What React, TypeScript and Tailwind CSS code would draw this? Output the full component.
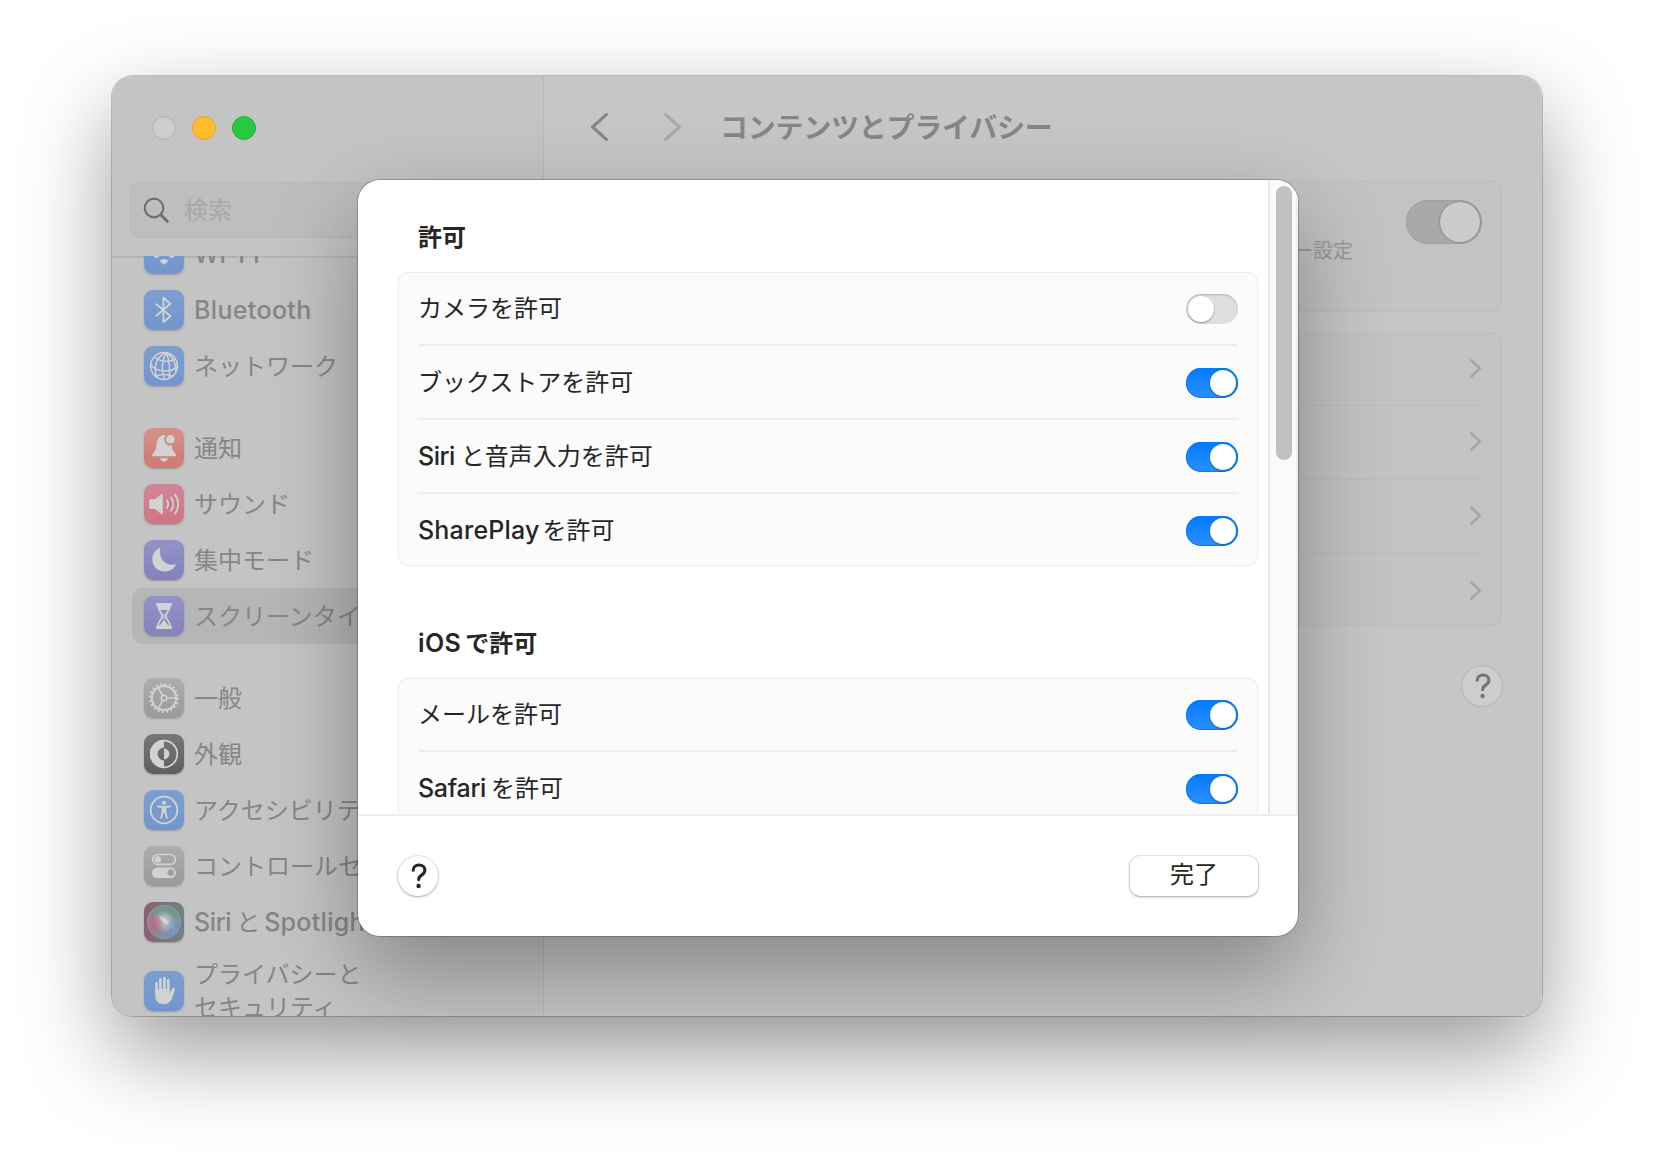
import React from "react";

type IconName =
  | "wifi" | "bluetooth" | "globe" | "bell" | "speaker" | "moon" | "hourglass"
  | "gear" | "appearance" | "accessibility" | "control" | "siri" | "hand";

const G = "#d2d2d2";

function Glyph({ name }: { name: IconName }) {
  const line = { fill: "none", stroke: G, strokeLinecap: "round" as const, strokeLinejoin: "round" as const };
  switch (name) {
    case "wifi":
      return (
        <g>
          <path d="M20 30.8 L15.6 27 A6 6 0 0 1 24.4 27 Z" fill={G} />
          <path {...line} strokeWidth="3" strokeLinecap="butt" d="M11 23.4 A12.4 12.4 0 0 1 29 23.4 M7 17.8 A18.4 18.4 0 0 1 33 17.8" />
        </g>
      );
    case "bluetooth":
      return <path {...line} strokeWidth="1.9" d="M12.4 14.3 L26.4 26.3 L19.4 32.2 V7.8 L26.4 13.7 L12.4 25.7" />;
    case "globe":
      return (
        <g {...line} strokeWidth="1.5">
          <circle cx="20" cy="20" r="13.4" />
          <path d="M22.2 6.8 C12.5 10.5 9.6 18.5 12.2 30.8" />
          <path d="M22.2 6.8 C17.8 14.5 17.4 24.5 20.4 33.4" />
          <path d="M22.2 6.8 C25.6 14.5 26.3 23 25.2 32.3" />
          <path d="M22.2 6.8 C28.8 10.6 31.8 16.4 32 25" />
          <path d="M10.4 10.8 C16 16.2 25.6 16.6 31.2 12.8" />
          <path d="M6.7 18.6 C13 26.4 26.5 27.2 33.4 20.6" />
          <path d="M11.6 30.2 C16.5 28.2 23.5 28.2 28.6 30.2" />
        </g>
      );
    case "bell":
      return (
        <g fill={G}>
          <path d="M20.6 6.9 C20.9 6.9 21.4 7 21.8 7.1 A6.2 6.2 0 0 0 27.8 17.3 C28.1 20.9 28.6 22.5 30.6 24.7 C31.5 25.7 32 26.3 32 27 C32 27.8 31.4 28.2 30.5 28.2 H9.6 C8.7 28.2 8.1 27.8 8.1 27 C8.1 26.3 8.6 25.7 9.5 24.7 C11.9 22 12.2 20.3 12.5 16 C12.8 12 14 9.3 17 8.1 C17.9 7.2 19.2 6.9 20.6 6.9 Z" />
          <circle cx="26.4" cy="11.3" r="4.3" />
          <path d="M16 30.2 H24 C23.6 32.2 22 33.4 20 33.4 C18 33.4 16.4 32.2 16 30.2 Z" />
        </g>
      );
    case "speaker":
      return (
        <g>
          <path d="M6.8 15.2 H11 L17 10.4 C17.9 9.7 18.8 10.1 18.8 11.2 V29 C18.8 30.1 17.9 30.5 17 29.8 L11 25.1 H6.8 C5.8 25.1 5.2 24.5 5.2 23.5 V16.8 C5.2 15.8 5.8 15.2 6.8 15.2 Z" fill={G} />
          <path {...line} strokeWidth="1.8" d="M22.9 16.2 C24.5 18.6 24.5 21.6 22.9 24 M26.9 13.4 C30 17.4 30 22.8 26.9 26.8 M31 10.7 C35.2 16.2 35.2 24 31 29.5" />
        </g>
      );
    case "moon":
      return <path fill={G} d="M16.3 8.6 C14.6 18.4 20.6 26.4 30.6 24.4 C31.6 24.2 31.9 24.7 31.5 25.5 C29.4 29.2 25.4 31.5 20.7 31.5 C13.6 31.5 8.3 26.3 8.3 19.3 C8.3 14.7 10.9 10.5 15.1 8.3 C15.9 7.9 16.4 8 16.3 8.6 Z" />;
    case "hourglass":
      return (
        <g>
          <rect x="12" y="7" width="16" height="3.2" rx="1.2" fill={G} />
          <rect x="12" y="29.8" width="16" height="3.2" rx="1.2" fill={G} />
          <path {...line} strokeWidth="1.8" d="M14 9.5 C14 15.5 18.3 16.8 18.3 20 C18.3 23.2 14 24.5 14 30.5 M26 9.5 C26 15.5 21.7 16.8 21.7 20 C21.7 23.2 26 24.5 26 30.5" />
          <path fill={G} d="M14 9 H26 L25.4 14 H14.6 Z" />
          <path fill={G} d="M19.5 18 H20.5 V24.5 L25 30.5 H15 L19.5 24.5 Z" />
        </g>
      );
    case "gear":
      return (
        <g fill="none" stroke={G}>
          <circle cx="20" cy="20" r="14" strokeWidth="2" strokeDasharray="2 2.398" />
          <circle cx="20" cy="20" r="12.1" strokeWidth="2" />
          <circle cx="20" cy="20" r="2.7" strokeWidth="1.6" />
          <path strokeWidth="1.7" d="M23 20 H32 M18.6 17.4 L14 9.4 M18.6 22.6 L14 30.6" />
        </g>
      );
    case "appearance":
      return (
        <g>
          <circle cx="20" cy="20" r="13.3" fill="none" stroke={G} strokeWidth="1.7" />
          <path d="M20 6 A14 14 0 0 0 20 34 V26.4 A6.4 6.4 0 0 1 20 13.6 Z" fill={G} />
          <path d="M20 14.6 A5.4 5.4 0 0 1 20 25.4 Z" fill={G} />
        </g>
      );
    case "accessibility":
      return (
        <g>
          <circle cx="20" cy="20" r="13.3" fill="none" stroke={G} strokeWidth="1.8" />
          <circle cx="20" cy="12.8" r="2.1" fill={G} />
          <path {...line} strokeWidth="1.9" d="M13.8 16.4 L18.3 17 H21.7 L26.2 16.4 M18.6 17.3 V22 L17.2 28 M21.4 17.3 V22 L22.8 28" />
          <path fill={G} d="M18 16.6 H22 V23 H18 Z" />
        </g>
      );
    case "control":
      return (
        <g>
          <rect x="8.8" y="8.5" width="22.6" height="9.9" rx="4.95" fill="none" stroke={G} strokeWidth="1.6" />
          <circle cx="13.8" cy="13.4" r="3.1" fill={G} />
          <rect x="8" y="21.4" width="24" height="10.6" rx="5.3" fill={G} />
          <circle cx="26.8" cy="26.6" r="3.3" fill="#9c9c9c" />
        </g>
      );
    case "siri":
      return (
        <g>
          <defs>
            <radialGradient id="sTop" cx="0.6" cy="0.15" r="0.65"><stop offset="0" stopColor="#6a9a8b" /><stop offset="1" stopColor="#6a9a8b" stopOpacity="0" /></radialGradient>
            <radialGradient id="sLeft" cx="0.22" cy="0.55" r="0.35"><stop offset="0" stopColor="#c0667f" /><stop offset="1" stopColor="#b0708c" stopOpacity="0" /></radialGradient>
            <radialGradient id="sRight" cx="0.75" cy="0.78" r="0.5"><stop offset="0" stopColor="#7496bd" /><stop offset="1" stopColor="#7496bd" stopOpacity="0" /></radialGradient>
            <radialGradient id="sMid" cx="0.5" cy="0.48" r="0.34"><stop offset="0" stopColor="#dcdce0" /><stop offset="1" stopColor="#d0d0d8" stopOpacity="0" /></radialGradient>
          </defs>
          <circle cx="20" cy="20" r="16.8" fill="#8d8791" />
          <circle cx="20" cy="20" r="16.8" fill="url(#sTop)" />
          <circle cx="20" cy="20" r="16.8" fill="url(#sRight)" />
          <circle cx="20" cy="20" r="16.8" fill="url(#sMid)" />
          <circle cx="20" cy="20" r="16.8" fill="url(#sLeft)" />
          <path d="M15 13.5 C19 15 23 18.5 25 21.5 C21 22 17 19 15 13.5 Z" fill="#dedee2" opacity="0.7" />
          <path d="M24 21 L30 27.5" stroke="#c3b4ac" strokeWidth="1" opacity="0.8" />
          <circle cx="30" cy="20.5" r="5" fill="#7fa2c4" opacity="0.4" />
          <circle cx="20" cy="20" r="16.5" fill="none" stroke="#92a5a5" strokeWidth="0.8" opacity="0.8" />
        </g>
      );
    case "hand":
      return (
        <g>
          <path {...line} strokeWidth="2.7" d="M12.5 12.2 V21 M16.4 8.3 V20 M20.4 7.3 V20 M24.3 9.3 V20" />
          <path fill={G} d="M11.2 18 H25.7 V22.3 C26.6 21 27.4 19 28.2 17.6 C29 16.3 31.2 16.8 30.8 18.6 C30 21.8 29 25 27.7 28 C26.2 31.4 23.6 33.2 19.9 33.2 C14.5 33.2 11.2 29.9 11.2 24.6 Z" />
        </g>
      );
  }
}

function AppIcon({ name, bg }: { name: IconName; bg: string }) {
  return (
    <span className={`block size-10 shrink-0 rounded-[9px] shadow-[0_1px_2px_rgba(0,0,0,0.22)] ${bg}`}>
      <svg width="40" height="40" viewBox="0 0 40 40"><Glyph name={name} /></svg>
    </span>
  );
}

const BLUE = "bg-linear-to-b from-[#7c9fcf] to-[#7295cf]";
const GRAY = "bg-linear-to-b from-[#acacac] to-[#9a9a9a]";
const PURPLE = "bg-linear-to-b from-[#9493c6] to-[#8481bc]";

function SideRow({ name, bg, active, tall, children }: {
  name: IconName; bg: string; active?: boolean; tall?: boolean; children: React.ReactNode;
}) {
  return (
    <div className={`flex shrink-0 items-center gap-2.5 rounded-[10px] pl-3 whitespace-nowrap ${tall ? "h-[82px] leading-[33px]" : "h-14 leading-8"} ${active ? "bg-black/7" : ""}`}>
      <AppIcon name={name} bg={bg} />
      <span className={tall ? "" : "pt-0.5"}>{children}</span>
    </div>
  );
}

function Switch({ on = true }: { on?: boolean }) {
  return (
    <span className={`flex h-[30px] w-[52px] shrink-0 items-center rounded-full px-0.5 ${on ? "justify-end bg-linear-to-b from-[#007aff] to-[#2890ff] shadow-[inset_0_0_0_1px_#0878f5]" : "justify-start bg-[#dfdfdf] shadow-[inset_0_1px_2px_rgba(0,0,0,0.2)]"}`}>
      <span className="size-[26px] rounded-full bg-white shadow-[0_1px_2px_rgba(0,0,0,0.35)]" />
    </span>
  );
}

function Row({ on, last, children }: { on?: boolean; last?: boolean; children: React.ReactNode }) {
  return (
    <div className={`flex shrink-0 items-center justify-between pt-0.5 ${last ? "h-[72px]" : "h-[74px] border-b-2 border-[#eeeeee]"}`}>
      <span className="text-[24px] leading-8 whitespace-nowrap">{children}</span>
      <Switch on={on} />
    </div>
  );
}

function Card({ children }: { children: React.ReactNode }) {
  return (
    <div className="flex h-[294px] shrink-0 flex-col rounded-[10px] bg-[#fbfbfb] px-5 shadow-[inset_0_0_0_1px_#ececec]">
      {children}
    </div>
  );
}

function Lat({ className = "", children }: { className?: string; children: React.ReactNode }) {
  return <span className={`text-[25px] leading-none ${className}`}>{children}</span>;
}

function Chevron({ w, h, left, color, sw }: { w: number; h: number; left?: boolean; color: string; sw: number }) {
  const a = sw / 2;
  const d = left ? `M${w - a} ${a} L${a} ${h / 2} L${w - a} ${h - a}` : `M${a} ${a} L${w - a} ${h / 2} L${a} ${h - a}`;
  return (
    <svg className="shrink-0" width={w} height={h} viewBox={`0 0 ${w} ${h}`}>
      <path d={d} fill="none" stroke={color} strokeWidth={sw} strokeLinecap="round" strokeLinejoin="round" />
    </svg>
  );
}

function Question({ color }: { color: string }) {
  return (
    <svg className="ml-px" width="16" height="26" viewBox="0 0 16 26">
      <path d="M2.2 7.2 C2.3 3.8 4.8 2 8 2 C11.4 2 13.9 4 13.9 7 C13.9 9.6 12.5 10.8 10.6 12.1 C8.6 13.4 7.7 14.4 7.7 16.6" fill="none" stroke={color} strokeWidth="3.1" strokeLinecap="round" />
      <circle cx="7.6" cy="23" r="2.2" fill={color} />
    </svg>
  );
}

export default function App() {
  return (
    <div className="relative h-[1164px] w-[1654px] overflow-hidden bg-white pt-[76px] pl-28 font-[Inter,'Noto_Sans_CJK_JP',sans-serif] text-[24px] text-[#868686]">
      <div className="h-[940px] w-[1430px] rounded-[21px] shadow-[0_0_0_1px_rgba(0,0,0,0.2),0_36px_90px_rgba(0,0,0,0.4)]">
        <div className="flex h-full overflow-hidden rounded-[21px] bg-[#c6c6c6]">
          <aside className="flex w-[432px] shrink-0 flex-col border-r border-[#b6b6b6] bg-[#c4c4c4]">
            <div className="mt-10 ml-10 flex gap-4">
              <span className="size-6 rounded-full border border-[#adadad] bg-[#cdcdcd]" />
              <span className="size-6 rounded-full border border-[#e5a02b] bg-[#febc2e]" />
              <span className="size-6 rounded-full border border-[#24b43a] bg-[#28c840]" />
            </div>
            <div className="mt-[42px] mr-5 ml-[18px] flex h-14 shrink-0 items-center gap-[15px] rounded-[10px] border border-[#b8b8b8] bg-[#bebebe] pl-3 text-[#a8a8a8]">
              <svg width="26" height="26" viewBox="0 0 26 26" fill="none" stroke="#707070" strokeLinecap="round">
                <circle cx="11" cy="11" r="9.3" strokeWidth="2.2" />
                <path d="M18 18 L24.2 24.2" strokeWidth="3" />
              </svg>
              <span className="pt-0.5 leading-8">検索</span>
            </div>
            <div className="mt-[18px] -mb-0.5 h-0.5 shrink-0 bg-[#b5b5b5]" />
            <nav className="relative flex min-h-0 flex-1 flex-col overflow-hidden px-5">
              <div className="-mt-[30px] shrink-0">
                <SideRow name="wifi" bg={BLUE}><Lat className="inline-block pt-[3px] font-[450] tracking-[0.4px]">Wi-Fi</Lat></SideRow>
              </div>
              <SideRow name="bluetooth" bg={BLUE}><Lat className="font-[450] tracking-[0.35px]">Bluetooth</Lat></SideRow>
              <SideRow name="globe" bg={BLUE}>ネットワーク</SideRow>
              <div className="h-[26px] shrink-0" />
              <SideRow name="bell" bg="bg-linear-to-b from-[#d3918b] to-[#cf7a73]">通知</SideRow>
              <SideRow name="speaker" bg="bg-linear-to-b from-[#cf8699] to-[#d07484]">サウンド</SideRow>
              <SideRow name="moon" bg={PURPLE}>集中モード</SideRow>
              <SideRow name="hourglass" bg={PURPLE} active>スクリーンタイム</SideRow>
              <div className="h-[26px] shrink-0" />
              <SideRow name="gear" bg={GRAY}>一般</SideRow>
              <SideRow name="appearance" bg="bg-linear-to-b from-[#777777] to-[#5f5f5f]">外観</SideRow>
              <SideRow name="accessibility" bg={BLUE}>アクセシビリティ</SideRow>
              <SideRow name="control" bg={GRAY}>コントロールセンター</SideRow>
              <SideRow name="siri" bg="bg-linear-to-r from-[#8f5d70] to-[#6d8386]">
                <Lat className="mr-[5px] font-[450] tracking-[-0.4px]">Siri</Lat>と<Lat className="ml-1 font-[450] tracking-[0.3px]">Spotlight</Lat>
              </SideRow>
              <SideRow name="hand" bg={BLUE} tall>プライバシーと<br />セキュリティ</SideRow>
            </nav>
          </aside>
          <main className="flex min-w-0 flex-1 flex-col">
            <header className="flex h-[104px] shrink-0 items-center pb-0.5 pl-[47px]">
              <Chevron left w={17} h={28} sw={3.2} color="#868686" />
              <span className="w-14" />
              <Chevron w={17} h={28} sw={3.2} color="#a8a8a8" />
              <h1 className="ml-[39px] pt-0.5 text-[28px] leading-9 font-bold tracking-[-0.25px] whitespace-nowrap">コンテンツとプライバシー</h1>
            </header>
            <div className="flex flex-col items-end gap-5 pr-10">
              <section className="flex h-[132px] w-[918px] items-start justify-end rounded-[10px] border border-[#bdbdbd] bg-[#c3c3c3] pt-[19px] pr-[19px]">
                <span className="mt-[37px] mr-[53px] text-[20px] leading-7 text-[#999999]">ー設定</span>
                <span className="flex h-11 w-[76px] items-center justify-end rounded-full bg-[#a8a8a8] pr-0.5 shadow-[inset_0_0_0_1px_#a0a0a0]">
                  <span className="size-10 rounded-full bg-[#cccccc] shadow-[0_0_2px_rgba(0,0,0,0.4)]" />
                </span>
              </section>
              <section className="flex h-[294px] w-[918px] flex-col rounded-[10px] border border-[#bdbdbd] bg-[#c3c3c3] px-[19px]">
                {[0, 1, 2, 3].map((i) => (
                  <div key={i} className={`flex shrink-0 items-center justify-end pr-px pb-0.5 ${i === 0 ? "h-[73px]" : "h-[74px]"} ${i < 3 ? "border-b border-[#bcbcbc]" : ""}`}>
                    <Chevron w={11} h={19} sw={2.6} color="#a6a6a6" />
                  </div>
                ))}
              </section>
              <span className="mt-5 flex size-10 items-center justify-center rounded-full bg-[#cdcdcd] shadow-[0_0_2px_rgba(0,0,0,0.25)]">
                <Question color="#747474" />
              </span>
            </div>
          </main>
        </div>
      </div>

      <div role="dialog" className="absolute top-[180px] left-[358px] h-[756px] w-[940px] rounded-[22px] shadow-[0_0_0_1px_rgba(0,0,0,0.22),0_36px_90px_rgba(0,0,0,0.33)]">
        <div className="flex h-full flex-col overflow-hidden rounded-[22px] bg-white text-[#262626]">
          <div className="flex h-[634px] shrink-0">
            <div className="flex w-[910px] flex-col overflow-hidden pt-10 pr-2.5 pl-10">
              <h2 className="mb-4 pl-5 text-[24px] leading-9 font-bold">許可</h2>
              <Card>
                <Row on={false}>カメラを許可</Row>
                <Row>ブックストアを許可</Row>
                <Row><Lat className="mr-1.5 font-[450] tracking-[-0.5px]">Siri</Lat>と音声入力を許可</Row>
                <Row last><Lat className="mr-[3px] font-[450] tracking-[0.2px]">SharePlay</Lat>を許可</Row>
              </Card>
              <h2 className="mt-[60px] mb-4 pl-5 text-[24px] leading-9 font-bold"><Lat className="mr-1 font-semibold tracking-[0.4px]">iOS</Lat>で許可</h2>
              <Card>
                <Row>メールを許可</Row>
                <Row><Lat className="mr-[5px] font-[450] tracking-[-0.3px]">Safari</Lat>を許可</Row>
              </Card>
            </div>
            <div className="w-[30px] border-r-2 border-l-2 border-r-[#f0f0f0] border-l-[#e6e6e6] bg-[#fafafa] pt-1.5 pl-1.5">
              <div className="h-[274px] w-4 rounded-full bg-[#c1c1c1]" />
            </div>
          </div>
          <div className="flex flex-1 items-center justify-between border-t-2 border-[#eeeeee] px-10">
            <button className="flex size-10 items-center justify-center rounded-full bg-white shadow-[0_0_0_1px_rgba(0,0,0,0.08),0_1px_3px_rgba(0,0,0,0.28)]">
              <Question color="#262626" />
            </button>
            <button className="h-10 w-32 rounded-[10px] bg-white pb-0.5 text-[24px] leading-8 shadow-[0_0_0_1px_rgba(0,0,0,0.08),0_1px_3px_rgba(0,0,0,0.3)]">完了</button>
          </div>
        </div>
      </div>
    </div>
  );
}
